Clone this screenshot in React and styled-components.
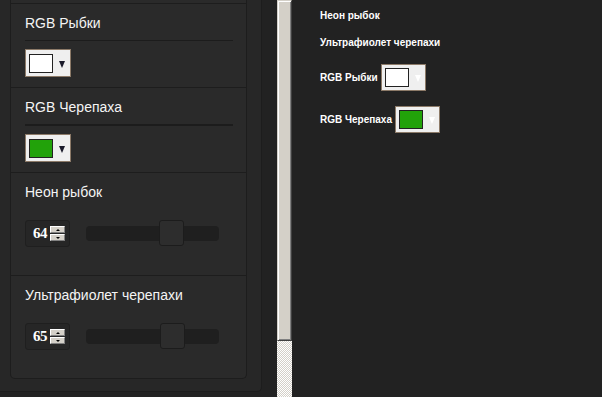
import React from "react";
import styled, { createGlobalStyle } from "styled-components";

const GlobalStyle = createGlobalStyle`
  html, body {
    margin: 0;
    padding: 0;
    background: #222222;
  }
  body {
    font-family: "Liberation Sans", Arial, sans-serif;
    color: #ffffff;
  }
`;

const Page = styled.div`
  display: flex;
  height: 397px;
  overflow: hidden;
`;

// Left settings pane
const LeftPane = styled.div`
  flex: none;
  width: 277px;
  background: #222222;
`;

const Outer = styled.div`
  box-sizing: border-box;
  width: 262px;
  height: 392px;
  padding-left: 10px;
  background: #272727;
  border-right: 1px solid #1d1d1d;
  border-bottom: 1px solid #1d1d1d;
  border-bottom-right-radius: 5px;
`;

const Panel = styled.div`
  box-sizing: border-box;
  width: 237px;
  background: #2a2a2a;
  border: 1px solid #1d1d1d;
  border-top: none;
  border-radius: 0 0 5px 5px;
`;

const Cut = styled.div`
  height: 3px;
`;

const Section = styled.div`
  border-top: 1px solid #1d1d1d;
  padding: 11px 13px ${(p) => p.$bottom}px 14px;
`;

const Heading = styled.div`
  font-size: 14px;
  line-height: 16px;
  color: #f4f4f4;
`;

const Rule = styled.div`
  height: ${(p) => p.$thick}px;
  background: #1c1c1c;
  margin: 9px 0 8px;
`;

const Picker = styled.div`
  box-sizing: border-box;
  display: flex;
  align-items: center;
  width: ${(p) => (p.$small ? 45 : 46)}px;
  height: ${(p) => (p.$small ? 27 : 28)}px;
  padding-left: 3px;
  background: #efefef;
  border: 1px solid #8c7a68;
`;

const Swatch = styled.div`
  box-sizing: border-box;
  width: 24px;
  height: 19px;
  background: ${(p) => p.$color};
  border: 1px solid #222222;
`;

const Arrow = styled.span`
  margin-left: 6px;
  margin-top: 2px;
  width: 0;
  height: 0;
  border-left: 3.5px solid transparent;
  border-right: 3.5px solid transparent;
  border-top: 7px solid ${(p) => (p.$light ? "#ffffff" : "#1a1a2a")};
`;

const ControlRow = styled.div`
  display: flex;
  align-items: center;
  margin-top: 20px;
`;

const NumberBox = styled.div`
  box-sizing: border-box;
  display: flex;
  align-items: center;
  width: 45px;
  height: 27px;
  padding-left: 7px;
  gap: 3px;
  background: #262626;
  border: 1px solid #1f1f1f;
  border-radius: 3px;
`;

const Digits = styled.span`
  font-family: "Liberation Serif", "Times New Roman", serif;
  font-weight: bold;
  font-size: 15px;
  letter-spacing: -0.5px;
  color: #ffffff;
`;

const Spinner = styled.div`
  display: flex;
  flex-direction: column;
  gap: 1px;
`;

const SpinButton = styled.div`
  box-sizing: border-box;
  display: flex;
  align-items: center;
  justify-content: center;
  width: 15px;
  height: 7px;
  background: #d4d0c8;
  border: 1px solid;
  border-color: #ffffff #808080 #808080 #ffffff;
  &::after {
    content: "";
    border-left: 2px solid transparent;
    border-right: 2px solid transparent;
    ${(p) =>
      p.$up
        ? "border-bottom: 2px solid #000;"
        : "border-top: 2px solid #000;"}
  }
`;

const Track = styled.div`
  position: relative;
  width: 133px;
  height: 15px;
  margin-left: 16px;
  background: #1f1f1f;
  border-radius: 4px;
`;

const Thumb = styled.div`
  position: absolute;
  top: -6px;
  box-sizing: border-box;
  width: 25px;
  height: 26px;
  background: #2d2d2d;
  border: 1px solid #1c1c1c;
  border-radius: 3px;
`;

// Scrollbar
const ScrollBar = styled.div`
  flex: none;
  display: flex;
  flex-direction: column;
  width: 15px;
  height: 397px;
`;

const ScrollThumb = styled.div`
  box-sizing: border-box;
  height: 341px;
  background: #d4d0c8;
  border: 1px solid;
  border-color: #d4d0c8 #404040 #404040 #d4d0c8;
  box-shadow: inset 1px 1px 0 #ffffff, inset -1px -1px 0 #808080;
`;

const ScrollTrack = styled.div`
  flex: 1;
  background-color: #ffffff;
  background-image: conic-gradient(
    #d4d0c8 25%,
    transparent 0 50%,
    #d4d0c8 0 75%,
    transparent 0
  );
  background-size: 2px 2px;
`;

// Right preview pane
const RightPane = styled.div`
  flex: 1;
  display: flex;
  flex-direction: column;
  gap: 15px;
  padding: 10px 0 0 28px;
  background: #222222;
`;

const Label = styled.div`
  display: flex;
  align-items: center;
  gap: 3px;
  min-height: 12px;
  font-size: 10px;
  font-weight: bold;
  line-height: 12px;
  color: #ffffff;
`;

const ColorSection = ({ title, color, thick }) => (
  <Section $bottom={10}>
    <Heading>{title}</Heading>
    <Rule $thick={thick} />
    <Picker>
      <Swatch $color={color} />
      <Arrow />
    </Picker>
  </Section>
);

const SliderSection = ({ title, value }) => (
  <Section $bottom={28}>
    <Heading>{title}</Heading>
    <ControlRow>
      <NumberBox>
        <Digits>{value}</Digits>
        <Spinner>
          <SpinButton $up />
          <SpinButton />
        </Spinner>
      </NumberBox>
      <Track>
        <Thumb style={{ left: `calc(${value}% - 12.5px)` }} />
      </Track>
    </ControlRow>
  </Section>
);

const App = () => {
  return (
    <Page>
      <GlobalStyle />
      <LeftPane>
        <Outer>
          <Panel>
            <Cut />
            <ColorSection title="RGB Рыбки" color="#ffffff" thick={1} />
            <ColorSection title="RGB Черепаха" color="#22a20a" thick={2} />
            <SliderSection title="Неон рыбок" value={64} />
            <SliderSection title="Ультрафиолет черепахи" value={65} />
          </Panel>
        </Outer>
      </LeftPane>
      <ScrollBar>
        <ScrollThumb />
        <ScrollTrack />
      </ScrollBar>
      <RightPane>
        <Label>Неон рыбок</Label>
        <Label>Ультрафиолет черепахи</Label>
        <Label>
          RGB Рыбки
          <Picker $small>
            <Swatch $color="#ffffff" />
            <Arrow $light />
          </Picker>
        </Label>
        <Label>
          RGB Черепаха
          <Picker $small>
            <Swatch $color="#22a20a" />
            <Arrow $light />
          </Picker>
        </Label>
      </RightPane>
    </Page>
  );
};

export default App;
